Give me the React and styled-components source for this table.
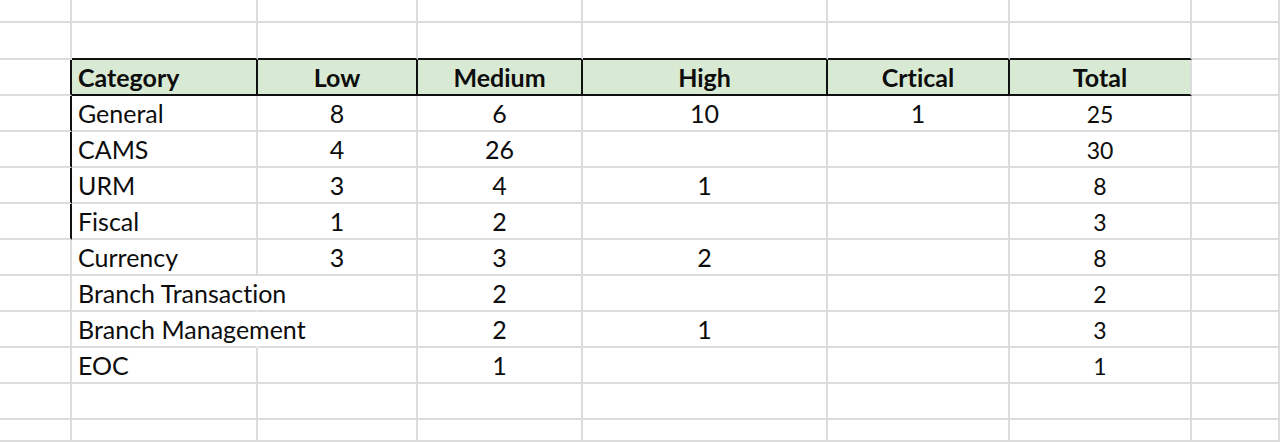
import React from 'react';
import styled, { createGlobalStyle } from 'styled-components';

const GlobalStyle = createGlobalStyle`
  html, body {
    margin: 0;
    padding: 0;
    background: #ffffff;
    overflow: hidden;
  }
  * {
    box-sizing: border-box;
  }
`;

const GRID = '#dcdcdc';
const INK = '#0d0d0d';
const BLACK = '#111111';

const Sheet = styled.div`
  display: grid;
  grid-template-columns: 72px 186px 160px 165px 245px 182px 182px 1fr;
  grid-template-rows: 23px 37px repeat(10, 36px) 1fr;
  width: 1280px;
  height: 442px;
  font-family: Lato, 'Open Sans', sans-serif;
  font-variant-ligatures: none;
  font-feature-settings: 'liga' 0, 'clig' 0;
  color: ${INK};
`;

const Cell = styled.div`
  display: flex;
  align-items: flex-end;
  justify-content: ${p => (p.$align === 'left' ? 'flex-start' : 'center')};
  padding: 0 6px 4px 6px;
  font-size: ${p => (p.$small ? '23px' : '25px')};
  font-weight: ${p => (p.$bold ? 700 : 400)};
  line-height: 1;
  white-space: nowrap;
  overflow: visible;
  background: ${p => (p.$fill ? '#d9ead4' : 'transparent')};
  border-right: 2px solid ${p => p.$right || GRID};
  border-bottom: 2px solid ${p => p.$bottom || GRID};
  position: relative;
  z-index: ${p => (p.$overflow ? 1 : 0)};
`;

const headers = ['Category', 'Low', 'Medium', 'High', 'Crtical', 'Total'];

const rows = [
  ['General', 8, 6, 10, 1, 25],
  ['CAMS', 4, 26, '', '', 30],
  ['URM', 3, 4, 1, '', 8],
  ['Fiscal', 1, 2, '', '', 3],
  ['Currency', 3, 3, 2, '', 8],
  ['Branch Transaction', '', 2, '', '', 2],
  ['Branch Management', '', 2, 1, '', 3],
  ['EOC', '', 1, '', '', 1],
];

export default function App() {
  const cells = [];

  // top row (partly cut off) and spacer row above the header
  for (let r = 0; r < 2; r++) {
    for (let c = 0; c < 8; c++) {
      const topOfHeader = r === 1 && c >= 1 && c <= 6;
      cells.push(
        <Cell key={`pre-${r}-${c}`} $bottom={topOfHeader ? BLACK : undefined} />
      );
    }
  }

  // header row
  cells.push(<Cell key="h-gutter" $right={BLACK} />);
  headers.forEach((h, i) => {
    cells.push(
      <Cell
        key={`h-${h}`}
        $fill
        $bold
        $align={i === 0 ? 'left' : 'center'}
        $right={i < 5 ? BLACK : undefined}
        $bottom={BLACK}
      >
        {h}
      </Cell>
    );
  });
  cells.push(<Cell key="h-tail" />);

  // data rows
  rows.forEach((row, r) => {
    const overflow = row[0].length > 12 && row[1] === '';
    cells.push(<Cell key={`g-${r}`} $right={r < 4 ? BLACK : undefined} />);
    row.forEach((v, c) => (
      cells.push(
        <Cell
          key={`d-${r}-${c}`}
          $align={c === 0 ? 'left' : 'center'}
          $small={c === 5}
          $overflow={c === 0 && overflow}
          $right={c === 0 && overflow ? 'transparent' : undefined}
        >
          {v}
        </Cell>
      )
    ));
    cells.push(<Cell key={`t-${r}`} />);
  });

  // empty rows below the table
  for (let r = 0; r < 2; r++) {
    for (let c = 0; c < 8; c++) {
      cells.push(<Cell key={`post-${r}-${c}`} />);
    }
  }

  return (
    <>
      <GlobalStyle />
      <Sheet>{cells}</Sheet>
    </>
  );
}
